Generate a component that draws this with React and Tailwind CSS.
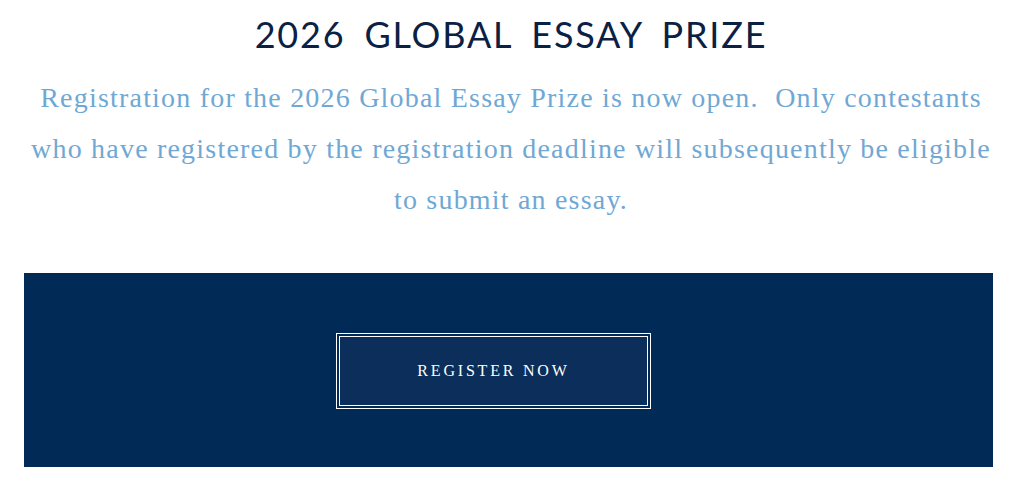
export default function App() {
  return (
    <div className="w-[1022px] h-[490px] bg-white flex flex-col items-center overflow-hidden">
      <h1
        className="mt-[12px] text-[36px] leading-[44px] text-[#0b2144] tracking-[1.8px] [word-spacing:8px]"
        style={{ fontFamily: '"Lato", "Open Sans", sans-serif', fontWeight: 400 }}
      >
        2026 GLOBAL ESSAY PRIZE
      </h1>
      <p
        className="mt-[16px] text-center text-[28px] leading-[51px] tracking-[1.2px] text-[#6fa8d5]"
        style={{ fontFamily: '"Liberation Serif", serif' }}
      >
        Registration for the 2026 Global Essay Prize is now open.&nbsp; Only contestants
        <br />
        who have registered by the registration deadline will subsequently be eligible
        <br />
        to submit an essay.
      </p>
      <div className="mt-[48px] self-start ml-[24px] w-[969px] h-[194px] bg-[#022a56] flex items-center justify-center">
        <div className="-ml-[30px] mt-[2px] border border-white p-[2px]">
          <div
            className="w-[309px] h-[70px] border border-white bg-[#0b2e5b] flex items-center justify-center text-white text-[16px] tracking-[2.8px]"
            style={{ fontFamily: '"Liberation Serif", serif' }}
          >
            REGISTER NOW
          </div>
        </div>
      </div>
    </div>
  );
}
